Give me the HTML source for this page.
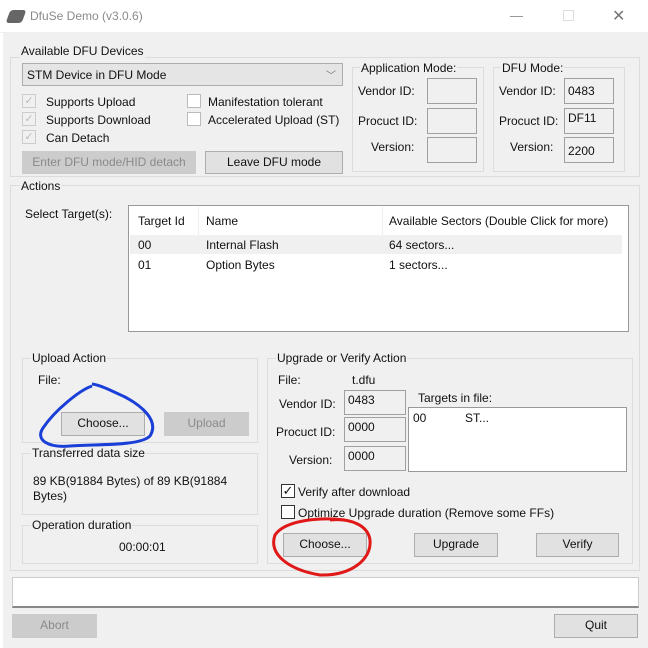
<!DOCTYPE html>
<html><head><meta charset="utf-8"><style>
*{box-sizing:border-box;margin:0;padding:0}
body{width:648px;height:648px;overflow:hidden;background:#f0f0f0;font-family:"Liberation Sans",sans-serif;font-size:12px;color:#111;position:relative}
.a{position:absolute;white-space:nowrap}
.g{position:absolute;border:1px solid #dcdcdc}
.l{position:absolute;background:#f0f0f0;padding:0 1px;white-space:nowrap;line-height:14px}
.f{position:absolute;background:#f0f0f0;border:1px solid #a0a0a0;padding:2px 0 0 3px}
.b{position:absolute;background:#e1e1e1;border:1px solid #adadad;text-align:center;line-height:21px}
.d{position:absolute;background:#cccccc;border:1px solid #cccccc;color:#8a8a8a;text-align:center;line-height:21px}
.c{position:absolute;width:14px;height:14px;border:1px solid #333;background:#fff}
.cd{position:absolute;width:14px;height:14px;border:1px solid #ccc;background:#f0f0f0;color:#bbb;font-size:11px;line-height:12px;text-align:center}
.cw{position:absolute;width:14px;height:14px;border:1px solid #bbb;background:#fff}
</style></head><body>
<div class="a" style="left:0;top:0;width:648px;height:33px;background:#fff;border-bottom:1px solid #eee"></div>
<div class="a" style="left:8px;top:10px;width:16px;height:13px;background:#666;border-radius:3px;transform:skewX(-20deg)"></div>
<div class="a" style="left:30px;top:9px;color:#8a8a8a;font-size:12px">DfuSe Demo (v3.0.6)</div>
<div class="a" style="left:510px;top:16px;width:13px;height:1px;background:#999"></div>
<div class="a" style="left:563px;top:10px;width:11px;height:11px;border:1px solid #ddd"></div>
<div class="a" style="left:612px;top:6px;color:#777;font-size:16px">✕</div>

<div class="g" style="left:10px;top:57px;width:630px;height:120px"></div>
<div class="l" style="left:20px;top:44px">Available DFU Devices</div>
<div class="a" style="left:22px;top:63px;width:321px;height:23px;background:#e5e5e5;border:1px solid #adadad;padding:4px 0 0 4px">STM Device in DFU Mode<span style="position:absolute;right:6px;top:3px;color:#777;font-size:10px">﹀</span></div>
<div class="cd" style="left:22px;top:94px">✓</div><div class="a" style="left:46px;top:95px">Supports Upload</div>
<div class="cd" style="left:22px;top:112px">✓</div><div class="a" style="left:46px;top:113px">Supports Download</div>
<div class="cd" style="left:22px;top:130px">✓</div><div class="a" style="left:46px;top:131px">Can Detach</div>
<div class="cw" style="left:187px;top:94px"></div><div class="a" style="left:208px;top:95px">Manifestation tolerant</div>
<div class="cw" style="left:187px;top:112px"></div><div class="a" style="left:208px;top:113px">Accelerated Upload (ST)</div>
<div class="d" style="left:22px;top:151px;width:174px;height:23px">Enter DFU mode/HID detach</div>
<div class="b" style="left:205px;top:151px;width:138px;height:23px">Leave DFU mode</div>

<div class="g" style="left:352px;top:67px;width:132px;height:105px"></div>
<div class="l" style="left:360px;top:61px">Application Mode:</div>
<div class="a" style="left:358px;top:84px">Vendor ID:</div>
<div class="a" style="left:358px;top:114px">Procuct ID:</div>
<div class="a" style="left:371px;top:140px">Version:</div>
<div class="f" style="left:427px;top:78px;width:50px;height:26px"></div>
<div class="f" style="left:427px;top:108px;width:50px;height:26px"></div>
<div class="f" style="left:427px;top:137px;width:50px;height:26px"></div>

<div class="g" style="left:493px;top:67px;width:132px;height:105px"></div>
<div class="l" style="left:501px;top:61px">DFU Mode:</div>
<div class="a" style="left:499px;top:84px">Vendor ID:</div>
<div class="a" style="left:499px;top:114px">Procuct ID:</div>
<div class="a" style="left:510px;top:140px">Version:</div>
<div class="f" style="left:564px;top:78px;width:50px;height:26px;padding-top:5px">0483</div>
<div class="f" style="left:564px;top:108px;width:50px;height:26px">DF11</div>
<div class="f" style="left:564px;top:137px;width:50px;height:26px;padding-top:6px">2200</div>

<div class="g" style="left:10px;top:185px;width:630px;height:386px"></div>
<div class="l" style="left:20px;top:179px">Actions</div>
<div class="a" style="left:25px;top:207px">Select Target(s):</div>
<div class="a" style="left:128px;top:205px;width:501px;height:127px;background:#fff;border:1px solid #999"></div>
<div class="a" style="left:198px;top:207px;width:1px;height:28px;background:#eee"></div>
<div class="a" style="left:382px;top:207px;width:1px;height:28px;background:#eee"></div>
<div class="a" style="left:138px;top:214px">Target Id</div>
<div class="a" style="left:206px;top:214px">Name</div>
<div class="a" style="left:389px;top:214px">Available Sectors (Double Click for more)</div>
<div class="a" style="left:130px;top:235px;width:492px;height:19px;background:#f0f0f0"></div>
<div class="a" style="left:138px;top:238px">00</div><div class="a" style="left:206px;top:238px">Internal Flash</div><div class="a" style="left:389px;top:238px">64 sectors...</div>
<div class="a" style="left:138px;top:258px">01</div><div class="a" style="left:206px;top:258px">Option Bytes</div><div class="a" style="left:389px;top:258px">1 sectors...</div>

<div class="g" style="left:22px;top:358px;width:236px;height:85px"></div>
<div class="l" style="left:31px;top:351px">Upload Action</div>
<div class="a" style="left:38px;top:373px">File:</div>
<div class="b" style="left:61px;top:412px;width:84px;height:24px">Choose...</div>
<div class="d" style="left:164px;top:412px;width:85px;height:24px">Upload</div>
<div class="g" style="left:22px;top:453px;width:236px;height:62px"></div>
<div class="l" style="left:31px;top:446px">Transferred data size</div>
<div class="a" style="left:33px;top:474px;line-height:15px">89 KB(91884 Bytes) of 89 KB(91884<br>Bytes)</div>
<div class="g" style="left:22px;top:525px;width:236px;height:39px"></div>
<div class="l" style="left:31px;top:518px">Operation duration</div>
<div class="a" style="left:119px;top:540px">00:00:01</div>

<div class="g" style="left:267px;top:358px;width:366px;height:206px"></div>
<div class="l" style="left:276px;top:351px">Upgrade or Verify Action</div>
<div class="a" style="left:278px;top:373px">File:</div>
<div class="a" style="left:352px;top:373px">t.dfu</div>
<div class="a" style="left:279px;top:397px">Vendor ID:</div>
<div class="a" style="left:276px;top:425px">Procuct ID:</div>
<div class="a" style="left:289px;top:453px">Version:</div>
<div class="f" style="left:344px;top:390px;width:62px;height:25px">0483</div>
<div class="f" style="left:344px;top:417px;width:62px;height:25px">0000</div>
<div class="f" style="left:344px;top:446px;width:62px;height:25px">0000</div>
<div class="a" style="left:418px;top:391px">Targets in file:</div>
<div class="a" style="left:408px;top:407px;width:219px;height:65px;background:#fff;border:1px solid #999"></div>
<div class="a" style="left:413px;top:411px">00</div><div class="a" style="left:465px;top:411px">ST...</div>
<div class="c" style="left:281px;top:484px;font-size:13px;line-height:12px;text-align:center">✓</div>
<div class="a" style="left:298px;top:485px">Verify after download</div>
<div class="c" style="left:281px;top:505px"></div>
<div class="a" style="left:298px;top:506px">Optimize Upgrade duration (Remove some FFs)</div>
<div class="b" style="left:283px;top:533px;width:84px;height:24px">Choose...</div>
<div class="b" style="left:414px;top:533px;width:84px;height:24px">Upgrade</div>
<div class="b" style="left:536px;top:533px;width:83px;height:24px">Verify</div>

<div class="a" style="left:12px;top:577px;width:627px;height:31px;background:#fff;border:1px solid #ccc;border-bottom:2px solid #888"></div>
<div class="d" style="left:12px;top:614px;width:85px;height:24px">Abort</div>
<div class="b" style="left:554px;top:614px;width:84px;height:24px">Quit</div>
<div class="a" style="left:0;top:33px;width:3px;height:615px;background:#fff"></div>

<svg class="a" style="left:0;top:0" width="648" height="648">
<path d="M92 386 C80 390 55 410 43 428 C35 440 48 448 70 446 C100 444 140 446 150 436 C160 420 140 405 125 397 C110 390 100 385 92 384" fill="none" stroke="#1a3fd8" stroke-width="3"/>
<path d="M345 520 C320 517 285 520 275 535 C268 555 290 570 320 575 C350 576 372 560 370 540 C368 525 350 518 330 520" fill="none" stroke="#e01818" stroke-width="3"/>
</svg>
</body></html>
